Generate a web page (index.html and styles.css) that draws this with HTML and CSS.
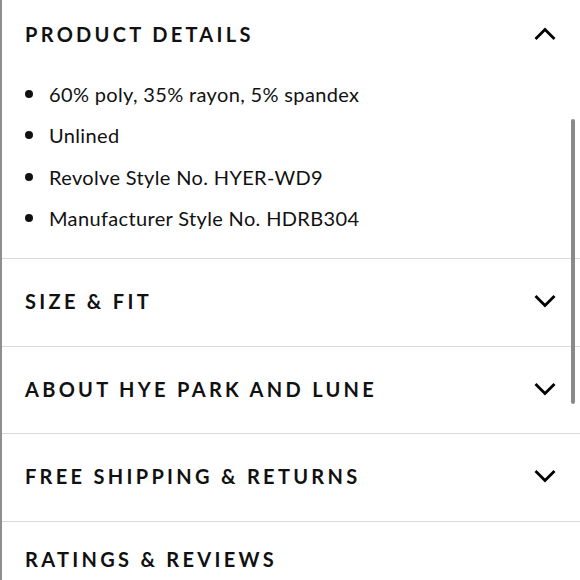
FILE: index.html
```html
<!DOCTYPE html>
<html>
<head>
<meta charset="utf-8">
<link rel="stylesheet" href="styles.css">
</head>
<body>
<div class="page">
  <div class="content">
    <section class="section open">
      <div class="head first">
        <h2 class="title">PRODUCT DETAILS</h2>
        <svg class="chev" width="22" height="14" viewBox="0 0 22 14"><polyline points="1.5,12 11,2.5 20.5,12" fill="none" stroke="#000" stroke-width="2.8"/></svg>
      </div>
      <ul class="list">
        <li>60% poly, 35% rayon, 5% spandex</li>
        <li>Unlined</li>
        <li>Revolve Style No. HYER-WD9</li>
        <li>Manufacturer Style No. HDRB304</li>
      </ul>
    </section>
    <section class="section">
      <div class="head">
        <h2 class="title">SIZE &amp; FIT</h2>
        <svg class="chev" width="22" height="14" viewBox="0 0 22 14"><polyline points="1.5,2 11,11.5 20.5,2" fill="none" stroke="#000" stroke-width="2.8"/></svg>
      </div>
    </section>
    <section class="section">
      <div class="head">
        <h2 class="title">ABOUT HYE PARK AND LUNE</h2>
        <svg class="chev" width="22" height="14" viewBox="0 0 22 14"><polyline points="1.5,2 11,11.5 20.5,2" fill="none" stroke="#000" stroke-width="2.8"/></svg>
      </div>
    </section>
    <section class="section">
      <div class="head">
        <h2 class="title">FREE SHIPPING &amp; RETURNS</h2>
        <svg class="chev" width="22" height="14" viewBox="0 0 22 14"><polyline points="1.5,2 11,11.5 20.5,2" fill="none" stroke="#000" stroke-width="2.8"/></svg>
      </div>
    </section>
    <section class="section">
      <div class="head last">
        <h2 class="title">RATINGS &amp; REVIEWS</h2>
      </div>
    </section>
  </div>
  <div class="scrollbar"></div>
</div>
</body>
</html>
```
FILE: styles.css
```css
html, body {
  margin: 0;
  padding: 0;
  background: #fff;
}
.page {
  position: relative;
  height: 580px;
  overflow: hidden;
  border-left: 2px solid #8f8f8f;
  box-sizing: border-box;
  font-family: Lato, "Liberation Sans", sans-serif;
  color: #111;
}
.content {
  display: flex;
  flex-direction: column;
}
.section + .section {
  border-top: 1px solid #d9d9d9;
}
.head {
  height: 86.5px;
  box-sizing: border-box;
  display: flex;
  align-items: center;
  justify-content: space-between;
  padding: 0 24px 2px 23px;
}
.head.first {
  height: 68px;
  padding-bottom: 1px;
}
.head.last {
  height: 60px;
  align-items: flex-start;
  padding-top: 25px;
}
.title {
  margin: 0;
  font-size: 20px;
  line-height: 24px;
  font-weight: 700;
  letter-spacing: 3.3px;
  color: #111;
}
.chev {
  display: block;
}
.list {
  list-style: none;
  margin: 5px 0 0;
  padding: 0 0 19px 23px;
}
.list li {
  display: flex;
  align-items: center;
  height: 41.5px;
  font-size: 20px;
  letter-spacing: 0.35px;
}
.list li::before {
  content: "";
  width: 8px;
  height: 8px;
  border-radius: 50%;
  background: #111;
  margin: 0 16px 0 0;
  flex: none;
}
.scrollbar {
  position: absolute;
  right: 5px;
  top: 119px;
  width: 4px;
  height: 285px;
  border-radius: 2px;
  background: #8a8a8a;
}
```
